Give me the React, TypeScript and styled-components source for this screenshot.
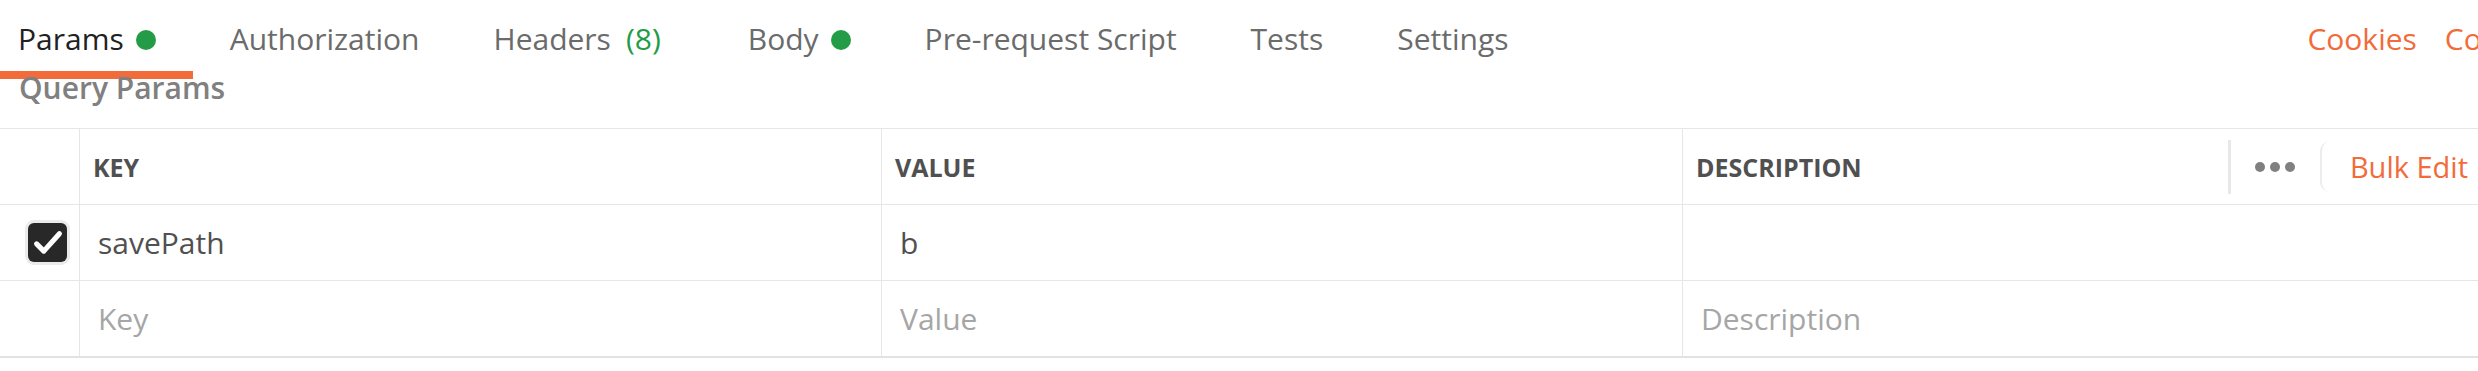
import * as React from "react";
import { styled, createGlobalStyle } from "styled-components";

const GlobalStyle = createGlobalStyle`
  html, body {
    margin: 0;
    padding: 0;
    background: #ffffff;
    overflow: hidden;
  }
  body {
    font-family: "Open Sans", "Noto Sans", sans-serif;
  }
`;

const ORANGE = "#f26b3a";
const GREEN = "#249c47";
const LINE = "#e6e6e6";

const Page = styled.div`
  width: 2540px;
  background: #fff;
`;

const TabBar = styled.div`
  display: flex;
  height: 79px;
  padding-right: 23px;
`;

const TabList = styled.div`
  display: flex;
`;

const Tab = styled.div<{ $active?: boolean }>`
  display: flex;
  align-items: center;
  gap: 12px;
  box-sizing: border-box;
  height: 79px;
  padding: 6px 37px 0;
  border-bottom: 8px solid ${(p) => (p.$active ? ORANGE : "transparent")};
  font-size: 30px;
  color: ${(p) => (p.$active ? "#212121" : "#6b6b6b")};
  white-space: nowrap;
  &:first-child {
    padding-left: 18px;
  }
`;

const Dot = styled.span`
  width: 20px;
  height: 20px;
  border-radius: 50%;
  background: ${GREEN};
  margin-top: 3px;
`;

const Count = styled.span`
  color: ${GREEN};
  margin-left: 3px;
  margin-right: 13px;
`;

const RightLinks = styled.div`
  margin-left: auto;
  display: flex;
  align-items: center;
  gap: 28px;
  padding-bottom: 2px;
  font-size: 30px;
  color: ${ORANGE};
`;

const Title = styled.div`
  height: 49px;
  line-height: 18px;
  padding-left: 19px;
  font-size: 30px;
  font-weight: 600;
  color: #808080;
`;

const Table = styled.div`
  border-top: 1px solid ${LINE};
  border-bottom: 2px solid #e2e2e2;
`;

const Row = styled.div`
  display: grid;
  grid-template-columns: 79px 802px 801px 1fr;
  height: 75px;
  & + & {
    border-top: 1px solid ${LINE};
  }
`;

const Cell = styled.div<{ $head?: boolean; $placeholder?: boolean }>`
  display: flex;
  align-items: center;
  box-sizing: border-box;
  border-left: 1px solid ${LINE};
  padding-left: ${(p) => (p.$head ? "13px" : "18px")};
  font-size: ${(p) => (p.$head ? "25px" : "30px")};
  font-weight: ${(p) => (p.$head ? 700 : 400)};
  text-transform: ${(p) => (p.$head ? "uppercase" : "none")};
  color: ${(p) => (p.$placeholder ? "#a6a6a6" : "#505050")};
  white-space: nowrap;
`;

const CheckCell = styled.div`
  display: flex;
  align-items: center;
  padding-left: 28px;
`;

const CheckBox = styled.span`
  display: flex;
  align-items: center;
  justify-content: center;
  width: 39px;
  height: 39px;
  border-radius: 6px;
  background: #282828;
  box-shadow: 0 0 0 3px #ebebeb;
`;

const HeadActions = styled.div`
  margin-left: auto;
  display: flex;
  align-items: center;
  padding-right: 44px;
`;

const Divider = styled.span`
  width: 3px;
  height: 54px;
  background: #e8e8e8;
  margin-right: 24px;
`;

const MoreButton = styled.span`
  display: flex;
  gap: 5px;
  margin-right: 25px;
  span {
    width: 10px;
    height: 10px;
    border-radius: 50%;
    background: #808080;
  }
`;

const BulkButton = styled.span`
  display: flex;
  align-items: center;
  box-sizing: border-box;
  height: 51px;
  padding: 0 28px;
  border-left: 2px solid #ececec;
  border-radius: 10px 0 0 10px;
  font-size: 29px;
  font-weight: 400;
  text-transform: none;
  color: ${ORANGE};
`;

function CheckIcon() {
  return (
    <svg width="36" height="36" viewBox="0 0 24 24">
      <polyline
        points="4.4,12.6 9.2,17.4 19.6,5.8"
        fill="none"
        stroke="#ffffff"
        strokeWidth="3.4"
        strokeLinecap="round"
        strokeLinejoin="round"
      />
    </svg>
  );
}

export default function App() {
  return (
    <Page>
      <GlobalStyle />
      <TabBar>
        <TabList>
          <Tab $active>
            Params <Dot />
          </Tab>
          <Tab>Authorization</Tab>
          <Tab>
            Headers<Count>(8)</Count>
          </Tab>
          <Tab>
            Body <Dot />
          </Tab>
          <Tab>Pre-request Script</Tab>
          <Tab>Tests</Tab>
          <Tab>Settings</Tab>
        </TabList>
        <RightLinks>
          <span>Cookies</span>
          <span>Code</span>
        </RightLinks>
      </TabBar>
      <Title>Query Params</Title>
      <Table>
        <Row>
          <CheckCell />
          <Cell $head>Key</Cell>
          <Cell $head>Value</Cell>
          <Cell $head>
            Description
            <HeadActions>
              <Divider />
              <MoreButton>
                <span />
                <span />
                <span />
              </MoreButton>
              <BulkButton>Bulk Edit</BulkButton>
            </HeadActions>
          </Cell>
        </Row>
        <Row>
          <CheckCell>
            <CheckBox>
              <CheckIcon />
            </CheckBox>
          </CheckCell>
          <Cell>savePath</Cell>
          <Cell>b</Cell>
          <Cell />
        </Row>
        <Row>
          <CheckCell />
          <Cell $placeholder>Key</Cell>
          <Cell $placeholder>Value</Cell>
          <Cell $placeholder>Description</Cell>
        </Row>
      </Table>
    </Page>
  );
}
